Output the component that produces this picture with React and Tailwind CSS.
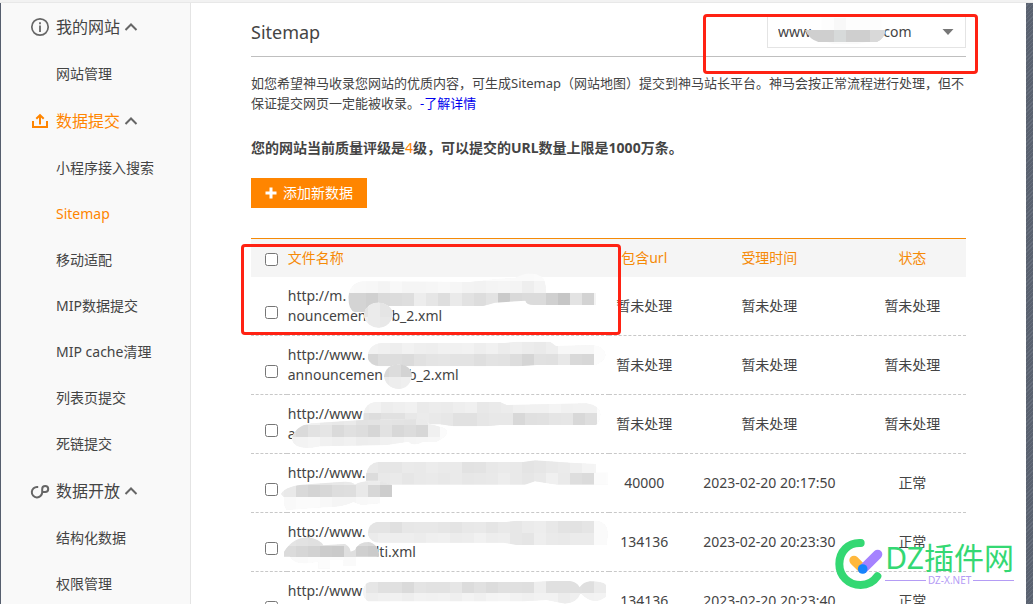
import React from 'react';

const menu = [
  { title: '我的网站', icon: 'info', items: ['网站管理'] },
  {
    title: '数据提交',
    icon: 'upload',
    active: true,
    items: ['小程序接入搜索', 'Sitemap', '移动适配', 'MIP数据提交', 'MIP cache清理', '列表页提交', '死链提交'],
  },
  { title: '数据开放', icon: 'link', items: ['结构化数据', '权限管理'] },
];

// Each mask is drawn on a grid three times finer than the page.
// bands: [y, height, first x, list of grey levels], one level for each 36-unit tile.
const rows = [
  {
    top: 141,
    lines: [['http://m.'], ['nouncemen', 'w-[25px]', 'b_2.xml']],
    count: '暂未处理',
    time: '暂未处理',
    state: '暂未处理',
    blobs: [
      {
        d: 'M325 200 Q330 158 370 154 L690 156 L760 148 L828 143 Q870 120 905 140 Q918 148 918 188 H1068 V225 H880 Q860 225 856 212 L765 218 L730 228 H395 L382 247 H345 Q325 240 325 200Z',
        bands: [
          [120, 35, 306, 'fb fb fb fb fb fb fb fb fb fb fb fb fb fb fa fa fb fb fb'],
          [154, 35, 306, 'f9 f8 f7 f4 f8 f5 f5 f6 f8 f6 f3 f2 f4 f5 f4 ee f4 fb fb fb fb'],
          [188, 60, 306, 'd4 d4 d0 da dc de ed e6 de ea e2 dd e3 ca d9 db db d0 c6 e3 d3'],
        ],
      },
      {
        d: 'M372 258 A43 37 0 0 1 459 252 A44 44 0 0 1 372 258Z',
        bands: [
          [215, 47, 348, 'e4 eb e5 e6'],
          [260, 40, 348, 'f0 eb e8 eb'],
        ],
      },
    ],
  },
  {
    top: 3,
    lines: [['http://www.'], ['announcemen', 'w-[25px]', 'b_2.xml']],
    count: '暂未处理',
    time: '暂未处理',
    state: '暂未处理',
    blobs: [
      {
        d: 'M383 70 Q383 28 425 24 L795 24 L830 20 H930 L948 33 L1060 30 Q1095 35 1097 60 Q1097 76 1068 90 H890 L835 94 H420 Q390 92 383 70Z',
        bands: [
          [18, 39, 342, 'f2 f2 f0 ee f2 ef ee f1 f1 f2 ee f1 ec ef ec ea ee f7 f7 f7 fc'],
          [57, 40, 342, 'd6 d6 dd dd db e1 e4 e5 e3 e3 df e3 e2 dd d5 e1 e0 e8 d9 d7 fc'],
        ],
      },
      {
        d: 'M432 124 Q438 90 475 88 Q513 90 516 122 Q510 160 475 162 Q437 158 432 124Z',
        bands: [
          [86, 40, 412, 'd8 dc d3'],
          [126, 38, 412, 'ea ed ef'],
        ],
      },
    ],
  },
  {
    top: 180,
    lines: [['http://www'], ['a']],
    count: '暂未处理',
    time: '暂未处理',
    state: '暂未处理',
    blobs: [
      {
        d: 'M370 240 Q375 202 410 201 H780 L800 210 L1040 205 Q1080 212 1082 237 Q1080 262 1068 270 H780 L740 274 H640 L600 268 L370 268Z',
        bands: [
          [200, 35, 350, 'f0 f2 ed ef f1 ea ec eb ee f0 e8 ea ec f0 f1 f1 f4 f1 f2 f2 fc'],
          [234, 42, 350, 'e0 dd e1 e1 e8 eb e9 e7 e1 e1 e6 e8 e8 d8 e0 e1 e5 e6 d8 de fc'],
        ],
      },
      {
        d: 'M155 312 Q165 272 215 265 L380 254 L550 252 L570 268 L600 275 Q622 280 622 292 Q620 306 590 320 H550 Q520 335 505 320 L440 330 L240 334 Q165 350 155 312Z',
        bands: [
          [250, 22, 132, 'f0 f0 f0 ea e8 ea e2 e3 e4 e3 e2 ea f1 f8'],
          [271, 36, 132, 'e1 da e2 e5 da e0 dd d6 e2 d8 dc d7 f0 fb'],
          [306, 45, 132, 'f2 f3 f5 f1 ef f1 ed ee f1 f2 f5 f6 f7 fb'],
        ],
      },
    ],
  },
  {
    top: 12,
    lines: [['http://www.'], ['']],
    count: '40000',
    time: '2023-02-20 20:17:50',
    state: '正常',
    blobs: [
      {
        d: 'M378 75 Q385 38 415 36 H850 L885 31 L990 38 L1068 42 V68 H1104 V104 H950 L885 94 L855 104 H440 L415 92 H378Z',
        bands: [
          [30, 42, 378, 'e9 e6 e6 ea e9 ec ea ea e2 e3 e8 ea e9 e4 e6 e9 eb ef f4 f5 f5'],
          [70, 36, 378, 'dc e9 ea e6 e9 ea e8 ea e7 e8 e9 ed e9 e6 e9 f0 ea de db fb fc'],
        ],
      },
      {
        d: 'M123 132 Q138 106 205 103 L300 96 Q335 92 345 104 Q365 90 420 94 L456 104 V141 H420 V160 L365 165 L340 156 Q310 172 250 172 L140 180 Q130 170 132 142Z',
        bands: [
          [90, 16, 132, 'ee ec e6 e6 e8 ea ea ec e6 e2'],
          [105, 36, 96, 'ec e9 d9 d4 d7 dd de e9 d7 cd'],
          [141, 42, 132, 'f9 fb fb f8 f5 f5 f8 f9 f9 f9'],
        ],
      },
    ],
  },
  {
    top: 189,
    lines: [['http://www.'], ['', 'w-[88px]', 'lti.xml']],
    count: '134136',
    time: '2023-02-20 20:23:30',
    state: '正常',
    blobs: [
      {
        d: 'M384 255 Q382 222 410 216 H800 L830 212 H1070 Q1102 216 1104 250 L1100 285 H830 L790 278 H420 Q392 278 384 255Z',
        bands: [
          [210, 40, 378, 'e4 e4 e0 e7 e8 e8 e6 e4 e8 e9 e5 e9 e7 eb ed e8 e3 e2 e5 fa fa'],
          [250, 36, 378, 'eb ee ee ee ec ef f0 ec ed f1 ed ee e7 e5 ee ea e9 eb eb fa fa'],
        ],
      },
      {
        d: 'M132 305 Q160 262 205 262 Q240 268 250 286 L315 282 Q330 290 332 305 L345 300 Q355 276 385 276 Q415 280 418 320 H348 V348 H310 V330 H270 V356 H235 V335 Q165 350 150 320 H132Z',
        bands: [
          [260, 28, 132, 'e4 e2 e0 e2 e2 e4 dc da'],
          [287, 34, 132, 'db d6 d2 cc ca df cf cb'],
          [320, 38, 132, 'fa fa fc fc fc fa fa fa'],
        ],
      },
    ],
  },
  {
    top: 366,
    lines: [['http://www'], ['']],
    count: '134136',
    time: '2023-02-20 20:23:40',
    state: '正常',
    blobs: [
      {
        d: 'M368 425 Q370 400 390 396 H880 L935 393 H990 Q1010 395 1019 412 Q1030 396 1050 394 Q1090 394 1098 405 V440 Q1060 470 1022 430 Q1010 460 975 461 L920 450 L850 454 H385 Q370 448 368 425Z',
        bands: [
          [390, 42, 378, 'e6 e0 e0 da e4 e2 e2 e6 dc e1 dc e0 e0 df ee e0 e0 e0 df eb ec'],
          [430, 34, 378, 'ee f0 f1 ee f2 f1 f2 ef f3 f0 f4 f5 f2 f0 f2 f2 ec ef f2 f3 fb'],
        ],
      },
    ],
  },
];

function Tiles({ blobs, name }) {
  return blobs.map((blob, i) => (
    <g key={i}>
      <clipPath id={`${name}-${i}`}>
        <path d={blob.d} />
      </clipPath>
      <g clipPath={`url(#${name}-${i})`} shapeRendering="crispEdges">
        <path d={blob.d} fill="#f4f4f4" />
        {blob.bands.map(([y, h, x, tones]) =>
          tones
            .split(' ')
            .map((t, k) => <rect key={`${y}-${k}`} x={x + k * 36} y={y} width="36" height={h} fill={`#${t}${t}${t}`} />),
        )}
      </g>
    </g>
  ));
}

function MenuIcon({ name }) {
  if (name === 'info') {
    return (
      <svg className="size-5" viewBox="0 0 20 20" fill="none" stroke="#666" aria-hidden="true">
        <circle cx="10" cy="10" r="8.2" strokeWidth="1.7" />
        <path d="M10 8.5V15" strokeWidth="1.8" />
        <path d="M10 5.2V7.2" strokeWidth="1.8" />
      </svg>
    );
  }
  if (name === 'upload') {
    return (
      <svg className="size-5" viewBox="0 0 20 20" fill="none" stroke="#ff8500" strokeWidth="2" aria-hidden="true">
        <path d="M3 10V16H17V10" />
        <path d="M10 13.5V5" />
        <path d="M6.3 7.8L10 4.2L13.7 7.8" />
      </svg>
    );
  }
  return (
    <svg className="size-5" viewBox="0 0 20 20" fill="none" stroke="#666" strokeWidth="2" aria-hidden="true">
      <path d="M8.2 6H7.4A5.2 5.2 0 1 0 12.2 11.4V8A3 3 0 1 1 15.2 11H12.5" />
    </svg>
  );
}

function Sidebar() {
  return (
    <nav aria-label="站长平台" className="w-[190px] shrink-0 border-r border-[#e4e4e4] bg-[#f9f9f9]">
      {menu.map((group) => (
        <section key={group.title}>
          <button type="button" aria-expanded="true" className="flex h-12 w-full items-center pb-px pl-[29px] text-base">
            <MenuIcon name={group.icon} />
            <span className={group.active ? 'ml-1.5 text-[#ff8500]' : 'ml-1.5 text-[#444]'}>{group.title}</span>
            <svg className="ml-[3px] h-3 w-4" viewBox="0 0 16 12" fill="none" stroke="#666" strokeWidth="2" aria-hidden="true">
              <path d="M2.5 9L8 3.5L13.5 9" />
            </svg>
          </button>
          <ul>
            {group.items.map((item) => (
              <li key={item}>
                <a
                  href="#"
                  className={
                    item === 'Sitemap'
                      ? 'flex h-[46px] items-center pl-[55px] text-[#ff8500]'
                      : 'flex h-[46px] items-center pl-[55px]'
                  }
                >
                  {item}
                </a>
              </li>
            ))}
          </ul>
        </section>
      ))}
    </nav>
  );
}

function PageHeader() {
  return (
    <header className="relative flex items-center justify-between border-b border-[#bfbfbf] pt-[13px] pb-2">
      <h1 className="text-lg leading-8">Sitemap</h1>
      <div className="relative w-[199px]">
        <select
          aria-label="选择网站"
          className="block h-8 w-full appearance-none border border-[#e4e4e4] bg-white pl-2.5 text-sm text-[#444]"
        >
          <option>{'www.' + '\u00a0'.repeat(19) + 'com'}</option>
        </select>
        <svg className="pointer-events-none absolute top-3 right-3 h-2 w-3" viewBox="0 0 12 8" aria-hidden="true">
          <path d="M0.5 1H11.5L6 7Z" fill="#777" />
        </svg>
        <svg className="pointer-events-none absolute top-0 left-0 h-8 w-[130px]" viewBox="231 48 390 96" aria-hidden="true">
          <path d="M395 50H575V90H395Z" fill="#fdfdfd" />
          <path d="M432 54H468V90H432Z" fill="#f8f8f8" />
          <path d="M345 90H586Q584 116 560 126H385Q358 118 345 90Z" fill="#cfcfcf" />
          <path d="M432 90H468V126H432Z" fill="#d7dada" />
          <path d="M540 90H586Q584 116 560 126H540Z" fill="#d9d9d9" />
          <path d="M410 127H530L500 132H430Z" fill="#fafafa" />
        </svg>
      </div>
      <div className="pointer-events-none absolute top-[11px] -right-3 h-[60px] w-[275px] rounded-sm border-3 border-[#ff2213]" />
    </header>
  );
}

function FileTable() {
  return (
    <div className="relative mt-[30px]">
      <table className="w-full table-fixed border-separate border-spacing-0 border-t border-[#f58a07]">
        <colgroup>
          <col className="w-[5%]" />
          <col className="w-[45%]" />
          <col className="w-[10%]" />
          <col className="w-[25%]" />
          <col className="w-[15%]" />
        </colgroup>
        <thead>
          <tr className="h-[38px] bg-[#f5f5f5] text-[#f58a07]">
            <th className="p-0 pt-0.5 pl-3.5 text-left">
              <input type="checkbox" aria-label="全选" className="block size-[13px]" />
            </th>
            <th className="p-0 pl-px text-left font-normal">文件名称</th>
            <th className="p-0 font-normal">包含url</th>
            <th className="p-0 font-normal">受理时间</th>
            <th className="p-0 font-normal">状态</th>
          </tr>
        </thead>
        <tbody>
          {rows.map((row, i) => (
            <tr key={i} className="h-[59px] text-center *:border-b *:border-dashed *:border-[#c8c8c8]">
              <td className="pt-3 pl-3.5">
                <input type="checkbox" aria-label={`选择第${i + 1}行`} className="block size-[13px]" />
              </td>
              <td className="relative pl-px text-left leading-5">
                {row.lines.map(([start, gap, end], k) => (
                  <div key={k} className="h-5 whitespace-nowrap">
                    {start}
                    {gap && <span className={`inline-block ${gap}`} />}
                    {end}
                  </div>
                ))}
                <svg
                  className="pointer-events-none absolute top-0 left-0 h-[59px] w-[325px] overflow-visible"
                  viewBox={`141 ${row.top} 975 177`}
                  aria-hidden="true"
                >
                  <Tiles blobs={row.blobs} name={`mask-${i}`} />
                </svg>
              </td>
              <td className="whitespace-nowrap">{row.count}</td>
              <td className="whitespace-nowrap">{row.time}</td>
              <td className="whitespace-nowrap">{row.state}</td>
            </tr>
          ))}
        </tbody>
      </table>
      <div className="pointer-events-none absolute top-1.5 -left-2.5 h-[91px] w-[380px] rounded-sm border-3 border-[#ff2213]" />
    </div>
  );
}

function Watermark() {
  return (
    <div className="pointer-events-none absolute right-[19px] bottom-3.5 flex items-center gap-0.5">
      <svg className="h-[52px] w-12" viewBox="38 84 144 156" fill="none" strokeLinecap="round" aria-hidden="true">
        <path d="M115 99C78 97 51 125 51 162C51 198 78 225 115 225C138 225 154 215 165 199" stroke="#34d873" strokeWidth="24" />
        <path d="M95 151L118 174" stroke="#ffb83d" strokeWidth="28" />
        <path d="M166 133L123 176" stroke="#a582ff" strokeWidth="28" />
        <circle cx="121" cy="177" r="14.5" fill="#1684fc" />
      </svg>
      <div>
        <div className="text-3xl leading-8 text-[#34d873]">DZ插件网</div>
        <div className="flex items-center gap-0.5 text-[10px] leading-3 text-[#b49cf5]">
          <span className="h-px flex-1 bg-[#b49cf5]" />
          DZ-X.NET
          <span className="h-px flex-1 bg-[#b49cf5]" />
        </div>
      </div>
    </div>
  );
}

export default function App() {
  return (
    <div className="relative flex h-screen flex-col overflow-hidden bg-white font-['Noto_Sans','Noto_Sans_CJK_SC',sans-serif] text-sm text-[#444]">
      <div className="h-[3px] shrink-0 border-b border-[#e8e8e8] bg-[#f2f2f2]" />
      <div className="flex min-h-0 flex-1">
        <div className="w-px shrink-0 bg-[#565e6e]" />
        <Sidebar />
        <main className="min-w-0 flex-1 px-15">
          <PageHeader />
          <p className="mt-4 text-[13px] leading-5">
            如您希望神马收录您网站的优质内容，可生成Sitemap（网站地图）提交到神马站长平台。神马会按正常流程进行处理，但不保证提交网页一定能被收录。
            <a href="#" className="text-[#0000ee]">
              -了解详情
            </a>
          </p>
          <p className="mt-[25px] leading-5 font-bold">
            您的网站当前质量评级是<span className="font-normal text-[#ff8500]">4</span>级，可以提交的URL数量上限是1000万条。
          </p>
          <button type="button" className="mt-5 flex h-[30px] items-center bg-[#ff8500] px-3.5 text-white">
            <svg className="mr-1.5 size-3" viewBox="0 0 12 12" stroke="#fff" strokeWidth="3" aria-hidden="true">
              <path d="M6 0.5V11.5M0.5 6H11.5" />
            </svg>
            添加新数据
          </button>
          <FileTable />
        </main>
        <div className="w-[7px] shrink-0 bg-[repeating-linear-gradient(135deg,#5a6270_0_2px,#666e7c_2px_3px)]" />
      </div>
      <Watermark />
    </div>
  );
}
